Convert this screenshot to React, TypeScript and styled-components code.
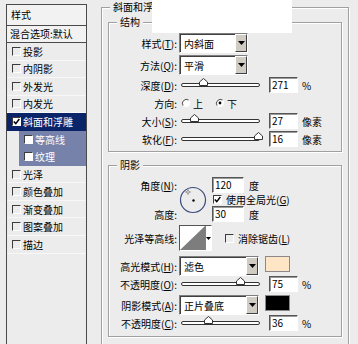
import React from "react";
import styled, { createGlobalStyle } from "styled-components";

const GlobalStyle = createGlobalStyle`
  html, body {
    margin: 0;
    padding: 0;
  }
  body {
    width: 358px;
    height: 344px;
    overflow: hidden;
    background: #ececec;
    color: #000;
    font-family: "Noto Sans CJK SC", "Noto Sans", sans-serif;
    font-size: 10px;
  }
`;

type ItemState = "normal" | "active" | "sub";

const effects: { name: string; state?: ItemState; checked?: boolean }[] = [
  { name: "投影" },
  { name: "内阴影" },
  { name: "外发光" },
  { name: "内发光" },
  { name: "斜面和浮雕", state: "active", checked: true },
  { name: "等高线", state: "sub" },
  { name: "纹理", state: "sub" },
  { name: "光泽" },
  { name: "颜色叠加" },
  { name: "渐变叠加" },
  { name: "图案叠加" },
  { name: "描边" },
];

const CheckMark = () => (
  <svg width="7" height="7" viewBox="0 0 7 7">
    <path d="M0.8 3.4 L2.8 5.6 L6.3 1" stroke="#000" strokeWidth="1.5" fill="none" />
  </svg>
);

const DownArrow = ({ w = 7, h = 4 }: { w?: number; h?: number }) => (
  <svg width={w} height={h} viewBox={`0 0 ${w} ${h}`}>
    <polygon points={`0,0 ${w},0 ${w / 2},${h}`} fill="#000" />
  </svg>
);

const Radio = ({ on }: { on?: boolean }) => (
  <RadioIcon width="10" height="10" viewBox="0 0 10 10">
    <circle cx="5" cy="5" r="4" fill="#fff" />
    <path d="M2.2 7.8 A4 4 0 0 1 7.8 2.2" stroke="#4a4a4a" fill="none" />
    <path d="M7.8 2.2 A4 4 0 0 1 2.2 7.8" stroke="#fff" fill="none" />
    {on && <circle cx="5" cy="5" r="1.4" fill="#000" />}
  </RadioIcon>
);

const Slider = ({ pos }: { pos: number }) => (
  <Track>
    <Thumb width="9" height="8" viewBox="0 0 9 8" style={{ left: `${pos}%` }}>
      <path d="M0.5 7.5 V4 L4.5 0.5 L8.5 4 V7.5 Z" fill="#fff" stroke="#333" />
    </Thumb>
  </Track>
);

const Select = ({ text, w }: { text: string; w: number }) => (
  <SelectBox $w={w}>
    <SelectText>{text}</SelectText>
    <SelectButton>
      <DownArrow />
    </SelectButton>
  </SelectBox>
);

export default function App() {
  return (
    <>
      <GlobalStyle />
      <Window>
        <Sidebar>
          <SideHeader>样式</SideHeader>
          <SideBlend>混合选项:默认</SideBlend>
          {effects.map((e) => {
            const state = e.state ?? "normal";
            return (
              <SideItem key={e.name} $state={state}>
                <Check $fill={state !== "normal"}>{e.checked && <CheckMark />}</Check>
                <span>{e.name}</span>
              </SideItem>
            );
          })}
        </Sidebar>

        <Main>
          <Group $outer>
            <Legend>斜面和浮雕</Legend>
            <Group>
              <Legend>结构</Legend>
              <Rows $top={4} $bottom={4}>
                <Row $h={20}>
                  <Label>
                    样式(<u>T</u>):
                  </Label>
                  <Select text="内斜面" w={69} />
                </Row>
                <Row $h={20} $mt={2}>
                  <Label>
                    方法(<u>Q</u>):
                  </Label>
                  <Select text="平滑" w={69} />
                </Row>
                <Row $h={16} $mt={2}>
                  <Label>
                    深度(<u>D</u>):
                  </Label>
                  <Slider pos={28} />
                  <NumBox>271</NumBox>
                  <Unit>%</Unit>
                </Row>
                <Row $h={16} $mt={2}>
                  <Label>方向:</Label>
                  <Radio />
                  <RadioText>上</RadioText>
                  <Radio on />
                  <RadioText>下</RadioText>
                </Row>
                <Row $h={16} $mt={2}>
                  <Label>
                    大小(<u>S</u>):
                  </Label>
                  <Slider pos={17} />
                  <NumBox>27</NumBox>
                  <Unit>像素</Unit>
                </Row>
                <Row $h={16} $mt={2}>
                  <Label>
                    软化(<u>F</u>):
                  </Label>
                  <Slider pos={100} />
                  <NumBox>16</NumBox>
                  <Unit>像素</Unit>
                </Row>
              </Rows>
            </Group>

            <Group $mt={6}>
              <Legend>阴影</Legend>
              <Rows $top={5} $bottom={5}>
                <AngleBlock>
                  <AngleLabel $row={1}>
                    角度(<u>N</u>):
                  </AngleLabel>
                  <Dial width="28" height="28" viewBox="0 0 28 28">
                    <circle cx="14" cy="14" r="12.5" fill="none" stroke="#3d4b7c" strokeWidth="1.2" />
                    <circle cx="14.5" cy="14.5" r="1.2" fill="#000" />
                    <path d="M9 3.5 V5.3 M9 6.7 V8.5 M6.5 6 H8.3 M9.7 6 H11.5" stroke="#333" strokeWidth="0.8" />
                  </Dial>
                  <AngleField $row={1}>
                    <NumBox $w={32}>120</NumBox>
                    <Unit $gap={5}>度</Unit>
                  </AngleField>
                  <AngleField $row={2}>
                    <Check $fill $gap={1}>
                      <CheckMark />
                    </Check>
                    <CheckText>
                      使用全局光(<u>G</u>)
                    </CheckText>
                  </AngleField>
                  <AngleLabel $row={3}>高度:</AngleLabel>
                  <AngleField $row={3}>
                    <NumBox $w={32}>30</NumBox>
                    <Unit $gap={5}>度</Unit>
                  </AngleField>
                </AngleBlock>

                <Row $h={26} $mt={3}>
                  <Label>光泽等高线:</Label>
                  <Contour>
                    <svg width="25" height="24" viewBox="0 0 25 24">
                      <polygon points="0,24 25,0 25,24" fill="#7d7d7d" />
                    </svg>
                    <ContourArrow>
                      <DownArrow w={5} h={3} />
                    </ContourArrow>
                  </Contour>
                  <Check $gap={13}>{null}</Check>
                  <CheckText>
                    消除锯齿(<u>L</u>)
                  </CheckText>
                </Row>

                <Row $h={20} $mt={5}>
                  <Label>
                    高光模式(<u>H</u>):
                  </Label>
                  <Select text="滤色" w={80} />
                  <Swatch $color="#fde5c5" />
                </Row>
                <Row $h={16}>
                  <Label>
                    不透明度(<u>O</u>):
                  </Label>
                  <Slider pos={77} />
                  <NumBox>75</NumBox>
                  <Unit>%</Unit>
                </Row>
                <Row $h={20} $mt={3}>
                  <Label>
                    阴影模式(<u>A</u>):
                  </Label>
                  <Select text="正片叠底" w={80} />
                  <Swatch $color="#000" />
                </Row>
                <Row $h={16}>
                  <Label>
                    不透明度(<u>C</u>):
                  </Label>
                  <Slider pos={35} />
                  <NumBox>36</NumBox>
                  <Unit>%</Unit>
                </Row>
              </Rows>
            </Group>
          </Group>
        </Main>

        <Mask />
      </Window>
    </>
  );
}

const Window = styled.div`
  position: relative;
  display: flex;
  align-items: flex-start;
  width: 358px;
  height: 344px;
  overflow: hidden;
`;

const Sidebar = styled.div`
  flex: none;
  display: flex;
  flex-direction: column;
  box-sizing: border-box;
  width: 81px;
  height: 360px;
  margin: 4px 0 0 6px;
  border: 1px solid #4a4a4a;
  border-bottom: none;
`;

const SideHeader = styled.div`
  height: 20px;
  line-height: 20px;
  padding-left: 4px;
  background: #f2f2f2;
  border-bottom: 1px solid #4a4a4a;
`;

const SideBlend = styled.div`
  height: 16px;
  line-height: 16px;
  padding-left: 3px;
  background: #f2f2f2;
  border-bottom: 1px solid #4a4a4a;
  white-space: nowrap;
`;

const SideItem = styled.div<{ $state: ItemState }>`
  display: flex;
  align-items: center;
  gap: 2px;
  box-sizing: border-box;
  height: 17.55px;
  margin-left: ${(p) => (p.$state === "sub" ? 12 : 0)}px;
  padding-left: ${(p) => (p.$state === "sub" ? 5 : 5)}px;
  border-bottom: 1px solid ${(p) => (p.$state === "normal" ? "#f7f7f7" : "transparent")};
  background: ${(p) =>
    p.$state === "active" ? "#0a246a" : p.$state === "sub" ? "#7682a9" : "transparent"};
  color: ${(p) => (p.$state === "normal" ? "#000" : "#fff")};
  white-space: nowrap;
`;

const Check = styled.span<{ $fill?: boolean; $gap?: number }>`
  flex: none;
  display: inline-flex;
  align-items: center;
  justify-content: center;
  box-sizing: border-box;
  width: 9px;
  height: 9px;
  margin-left: ${(p) => p.$gap ?? 0}px;
  border: 1px solid;
  border-color: #3c3c3c #fff #fff #3c3c3c;
  background: ${(p) => (p.$fill ? "#fff" : "transparent")};
`;

const CheckText = styled.span`
  margin-left: 4px;
  white-space: nowrap;
`;

const Main = styled.div`
  flex: none;
  width: 248px;
  margin-left: 14px;
`;

const Group = styled.fieldset<{ $outer?: boolean; $mt?: number }>`
  min-width: 0;
  margin: ${(p) => (p.$outer ? "0" : `${p.$mt ?? 1}px 6px 0`)};
  padding: 0 0 ${(p) => (p.$outer ? 20 : 0)}px;
  border: 1px solid #a0a0a0;
  box-shadow: 1px 1px 0 #fff, inset 1px 1px 0 #fff;
`;

const Legend = styled.legend`
  margin-left: 8px;
  padding: 0 3px;
  height: 14px;
  line-height: 14px;
  background: #ececec;
  white-space: nowrap;
`;

const Rows = styled.div<{ $top: number; $bottom: number }>`
  display: flex;
  flex-direction: column;
  padding: ${(p) => p.$top}px 0 ${(p) => p.$bottom}px;
`;

const Row = styled.div<{ $h: number; $mt?: number }>`
  display: flex;
  align-items: center;
  height: ${(p) => p.$h}px;
  margin-top: ${(p) => p.$mt ?? 0}px;
  white-space: nowrap;
`;

const Label = styled.span`
  flex: none;
  box-sizing: border-box;
  width: 70px;
  padding-right: 2px;
  text-align: right;
  white-space: nowrap;
`;

const SelectBox = styled.div<{ $w: number }>`
  display: flex;
  box-sizing: border-box;
  width: ${(p) => p.$w}px;
  height: 100%;
  border: 1px solid;
  border-color: #7f7f7f #fff #fff #7f7f7f;
  box-shadow: inset 1px 1px 0 #404040;
  background: #fff;
`;

const SelectText = styled.span`
  flex: 1;
  align-self: center;
  padding-left: 4px;
`;

const SelectButton = styled.span`
  flex: none;
  display: flex;
  align-items: center;
  justify-content: center;
  box-sizing: border-box;
  width: 12px;
  border: 1px solid;
  border-color: #fff #404040 #404040 #fff;
  background: #d0ccc4;
`;

const Track = styled.div`
  position: relative;
  flex: none;
  box-sizing: border-box;
  width: 79px;
  height: 4px;
  margin: 0 9px 0 2px;
  border: 1px solid #333;
  border-radius: 2px;
  background: #fff;
`;

const Thumb = styled.svg`
  position: absolute;
  top: -6px;
  margin-left: -5px;
`;

const NumBox = styled.span<{ $w?: number }>`
  flex: none;
  box-sizing: border-box;
  width: ${(p) => p.$w ?? 29}px;
  height: 16px;
  line-height: 14px;
  padding-left: 2px;
  border: 1px solid;
  border-color: #555 #fff #fff #555;
  box-shadow: inset 1px 1px 0 #9a9a9a;
  background: #fff;
`;

const Unit = styled.span<{ $gap?: number }>`
  margin-left: ${(p) => p.$gap ?? 4}px;
`;

const RadioIcon = styled.svg`
  flex: none;
  margin-left: 2px;
`;

const RadioText = styled.span`
  margin: 0 10px 0 2px;
`;

const AngleBlock = styled.div`
  display: grid;
  grid-template-columns: 70px 33px auto;
  grid-template-rows: 16px 13px 16px;
  align-items: center;
`;

const AngleLabel = styled(Label)<{ $row: number }>`
  grid-column: 1;
  grid-row: ${(p) => p.$row};
`;

const AngleField = styled.div<{ $row: number }>`
  grid-column: 3;
  grid-row: ${(p) => p.$row};
  display: flex;
  align-items: center;
  height: 100%;
`;

const Dial = styled.svg`
  grid-column: 2;
  grid-row: 1 / 4;
  align-self: center;
`;

const Contour = styled.div`
  flex: none;
  display: flex;
  box-sizing: border-box;
  width: 33px;
  height: 26px;
  border: 1px solid;
  border-color: #555 #fff #fff #555;
  background: #fff;
`;

const ContourArrow = styled.span`
  flex: 1;
  display: flex;
  align-items: center;
  justify-content: center;
  border-left: 1px solid #808080;
`;

const Swatch = styled.span<{ $color: string }>`
  flex: none;
  align-self: flex-start;
  box-sizing: border-box;
  width: 25px;
  height: 16px;
  margin-left: 6px;
  border: 1px solid #8a8a8a;
  background: ${(p) => p.$color};
`;

const Mask = styled.div`
  position: absolute;
  left: 152px;
  top: 0;
  width: 140px;
  height: 33px;
  background: #fff;
`;
